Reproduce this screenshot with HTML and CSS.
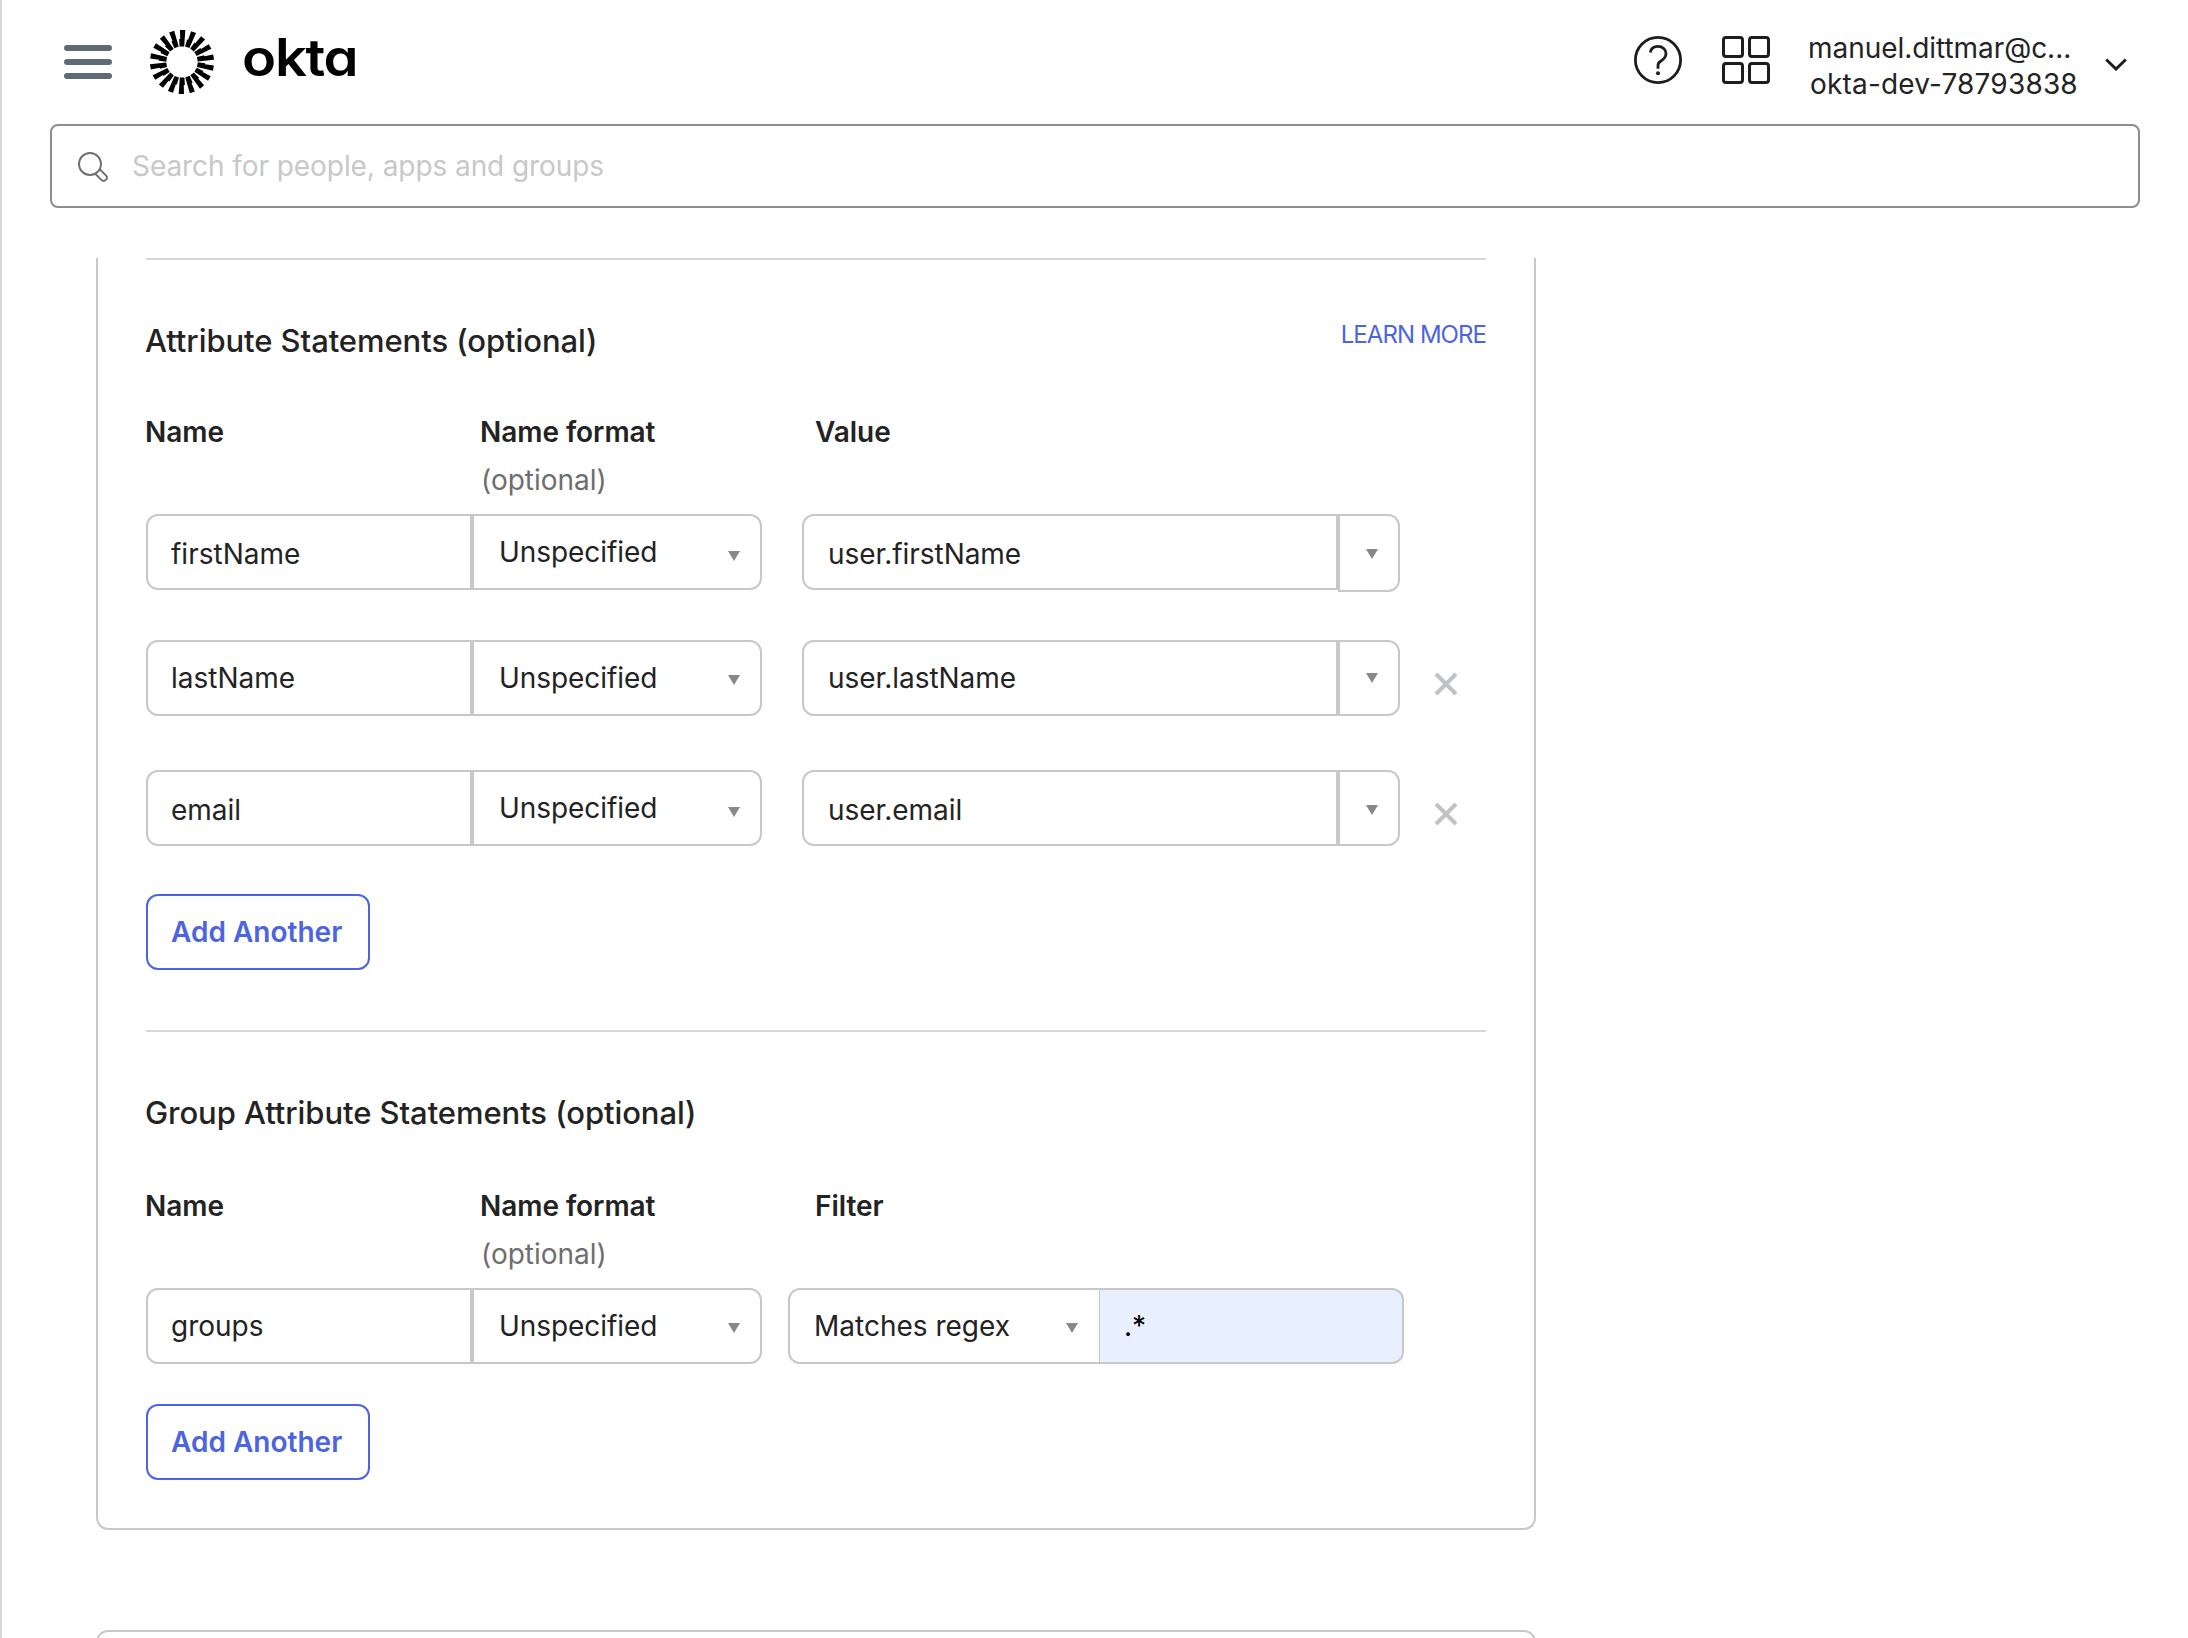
FILE: index.html
```html
<!DOCTYPE html>
<html lang="en">
<head>
<meta charset="utf-8">
<title>Okta Admin</title>
<link rel="stylesheet" href="styles.css">
</head>
<body>
<svg class="defs" aria-hidden="true">
  <symbol id="close" viewBox="0 0 24 24"><path d="M2 2L22 22M22 2L2 22" fill="none" stroke="#c1c1c8" stroke-width="4"/></symbol>
  <symbol id="caret" viewBox="0 0 12 10"><path d="M0 0H12L6 10Z" fill="#888"/></symbol>
</svg>
<div class="screen">
  <header class="topbar">
    <button class="menu" aria-label="Menu"><i></i><i></i><i></i></button>
    <svg class="burst" viewBox="-32 -32 64 64">
      <defs><path id="ray" d="M-2 -32H3.3L2.2 -15.6H-2.4L-2.9 -23H-1.8Z"/></defs>
      <use href="#ray"/><use href="#ray" transform="rotate(20)"/><use href="#ray" transform="rotate(40)"/><use href="#ray" transform="rotate(60)"/><use href="#ray" transform="rotate(80)"/><use href="#ray" transform="rotate(100)"/><use href="#ray" transform="rotate(120)"/><use href="#ray" transform="rotate(140)"/><use href="#ray" transform="rotate(160)"/><use href="#ray" transform="rotate(180)"/><use href="#ray" transform="rotate(200)"/><use href="#ray" transform="rotate(220)"/><use href="#ray" transform="rotate(240)"/><use href="#ray" transform="rotate(260)"/><use href="#ray" transform="rotate(280)"/><use href="#ray" transform="rotate(300)"/><use href="#ray" transform="rotate(320)"/><use href="#ray" transform="rotate(340)"/>
    </svg>
    <span class="wordmark">okta</span>
    <div class="tools">
      <svg class="help" viewBox="0 0 48 48" fill="none" stroke="#1d1d21" stroke-width="2.8">
        <circle cx="24" cy="24" r="22.6"/>
        <path d="M16.3 16.4C17 12.6 19.8 10.4 24 10.4C28.6 10.4 32 13.5 32 17.6C32 21.9 29.3 23.6 26.7 25.2C24.7 26.4 24 27.2 24 29.2V32.8"/>
        <circle cx="24" cy="37.3" r="2" fill="#1d1d21" stroke="none"/>
      </svg>
      <svg class="apps" viewBox="0 0 48 48" fill="none" stroke="#1d1d21" stroke-width="3">
        <rect x="1.5" y="1.5" width="19" height="19" rx="2.5"/><rect x="27.5" y="1.5" width="19" height="19" rx="2.5"/>
        <rect x="1.5" y="27.5" width="19" height="19" rx="2.5"/><rect x="27.5" y="27.5" width="19" height="19" rx="2.5"/>
      </svg>
      <div class="account"><span class="mail">manuel.dittmar@c...</span><span class="org">okta-dev-78793838</span></div>
      <svg class="chevron" viewBox="0 0 22 13"><path d="M1.2 1.5L11 11L20.8 1.5" fill="none" stroke="#1d1d21" stroke-width="3"/></svg>
    </div>
  </header>
  <div class="search">
    <svg viewBox="0 0 32 32" fill="none" stroke="#6e6e78" stroke-width="1.9"><circle cx="13" cy="13" r="11"/><path d="M18.5 23L24.6 29.1A3.2 3.2 0 0 0 29.1 24.6L23 18.5"/></svg>
    <span class="placeholder">Search for people, apps and groups</span>
  </div>
  <main class="card">
    <section class="block first">
      <div class="head"><h2>Attribute Statements (optional)</h2><a class="learn">LEARN MORE</a></div>
      <div class="labels"><b>Name</b><div><b>Name format</b><span>(optional)</span></div><b>Value</b></div>
      <div class="row r1">
        <div class="input low"><span>firstName</span></div><div class="select"><span>Unspecified</span><svg><use href="#caret"/></svg></div>
        <div class="value low"><span>user.firstName</span></div><div class="drop tall"><svg><use href="#caret"/></svg></div>
      </div>
      <div class="row r2">
        <div class="input"><span>lastName</span></div><div class="select up"><span>Unspecified</span><svg><use href="#caret"/></svg></div>
        <div class="value"><span>user.lastName</span></div><div class="drop up"><svg><use href="#caret"/></svg></div>
        <svg class="remove"><use href="#close"/></svg>
      </div>
      <div class="row r3">
        <div class="input low"><span>email</span></div><div class="select"><span>Unspecified</span><svg><use href="#caret"/></svg></div>
        <div class="value low"><span>user.email</span></div><div class="drop"><svg><use href="#caret"/></svg></div>
        <svg class="remove"><use href="#close"/></svg>
      </div>
      <button class="add">Add Another</button>
    </section>
    <section class="block second">
      <div class="head"><h2>Group Attribute Statements (optional)</h2></div>
      <div class="labels"><b>Name</b><div><b>Name format</b><span>(optional)</span></div><b>Filter</b></div>
      <div class="row r1">
        <div class="input"><span>groups</span></div><div class="select up"><span>Unspecified</span><svg><use href="#caret"/></svg></div>
        <div class="filter"><span>Matches regex</span><svg><use href="#caret"/></svg></div><div class="pattern"><span>.*</span></div>
      </div>
      <button class="add">Add Another</button>
    </section>
  </main>
  <div class="card next"></div>
</div>
</body>
</html>
```
FILE: styles.css
```css
* { box-sizing: border-box; }
body { margin: 0; background: #fff; color: #232323; font: 400 28px/40px Inter, "Liberation Sans", sans-serif; }
.defs { display: none; }
.screen { height: 1638px; overflow: hidden; border-left: 2px solid #d7d7dc; display: flex; flex-direction: column; }
.topbar { display: flex; flex: none; height: 124px; padding: 30px 61px 0 62px; align-items: flex-start; }
.menu { width: 48px; height: 34px; margin: 15px 38px 0 0; padding: 0; border: 0; background: none; display: flex; flex-direction: column; gap: 8px; }
.menu i { width: 48px; height: 6px; border-radius: 3px; background: #5e6c75; }
.burst { width: 64px; height: 64px; margin-right: 28px; }
.wordmark { font-size: 52px; line-height: 60px; font-weight: 600; color: #000; font-feature-settings: "cv11"; letter-spacing: -1.2px; margin-top: -2px; transform: scaleX(1.08); transform-origin: left; }
.tools { margin-left: auto; display: flex; align-items: flex-start; }
.help { width: 48px; height: 48px; margin: 6px 40px 0 0; }
.apps { width: 48px; height: 48px; margin: 6px 38px 0 0; }
.account { width: 297px; display: flex; flex-direction: column; line-height: 36px; }
.mail { letter-spacing: -0.05px; }
.org { margin-left: 2px; letter-spacing: 0.18px; }
.chevron { width: 22px; height: 13px; margin-top: 28px; }
.search { flex: none; height: 84px; margin: 0 48px; border: 2px solid #8c8c96; border-radius: 8px; display: flex; align-items: center; padding-left: 25px; }
.search svg { width: 32px; height: 32px; margin: 2px 23px 0 0; }
.placeholder { color: #c8c8c8; letter-spacing: -0.07px; }
.card { flex: none; width: 1440px; height: 1272px; margin: 50px 0 0 94px; padding: 0 48px; border: 2px solid #c8c8c8; border-top: 0; border-radius: 0 0 12px 12px; }
.card.next { margin-top: 100px; height: 60px; border-top: 2px solid #c8c8c8; border-radius: 12px; }
.block { border-top: 2px solid #d7d7dc; }
.first { height: 772px; }
.head { display: flex; justify-content: space-between; padding-top: 61px; height: 148px; }
h2 { margin: 0 0 0 -1px; font-size: 31px; line-height: 40px; font-weight: 500; letter-spacing: -0.07px; }
.learn { font-size: 24px; line-height: 27px; color: #4c64e1; letter-spacing: -0.95px; }
.labels { display: grid; grid-template-columns: 335px 335px 1fr; height: 106px; line-height: 48px; }
.labels b { font-weight: 600; display: block; margin-left: -1px; letter-spacing: -0.05px; }
.labels span { display: block; color: #6e6e6e; }
.row { display: flex; height: 76px; align-items: flex-start; white-space: nowrap; }
.row > div { height: 76px; border: 2px solid #c8c8c8; display: flex; align-items: center; }
.row > div.tall { height: 78px; }
.row .input { width: 326px; padding-left: 23px; border-radius: 12px 0 0 12px; }
.row .low { padding-top: 3px; }
.row .select { width: 290px; padding: 0 20px 0 25px; border-radius: 0 12px 12px 0; justify-content: space-between; margin-right: 40px; letter-spacing: -0.07px; }
.row .value { width: 536px; padding-left: 24px; border-radius: 12px 0 0 12px; letter-spacing: -0.05px; }
.row .drop { width: 62px; padding-left: 26px; border-radius: 0 12px 12px 0; }
.row > div svg { width: 12px; height: 10px; margin-top: 7px; }
.row .up svg { margin-top: 4px; }
.row .drop svg { margin-top: 4px; }
.row .tall svg { margin-top: 2px; }
.row .drop.up svg { margin-top: 0; }
.row .filter { width: 312px; margin-left: -14px; padding: 0 21px 0 24px; border-radius: 12px 0 0 12px; border-right-width: 1px; justify-content: space-between; }
.row .filter svg { margin-top: 4px; }
.row .pattern { width: 304px; padding-left: 24px; border-left: 0; border-radius: 0 12px 12px 0; background: #e8f0fe; color: #000; }
.remove { width: 24px; height: 24px; margin: 32px 0 0 34px; }
.r2 { margin-top: 50px; }
.r3 { margin-top: 54px; }
.add { display: block; width: 224px; height: 76px; margin-top: 48px; padding: 0 0 0 23px; text-align: left; border: 2px solid #4c64e1; border-radius: 12px; background: #fff; color: #4c64e1; font: 600 28px/40px Inter, "Liberation Sans", sans-serif; }
.second .head { height: 150px; }
.second .add { margin-top: 40px; }
```
